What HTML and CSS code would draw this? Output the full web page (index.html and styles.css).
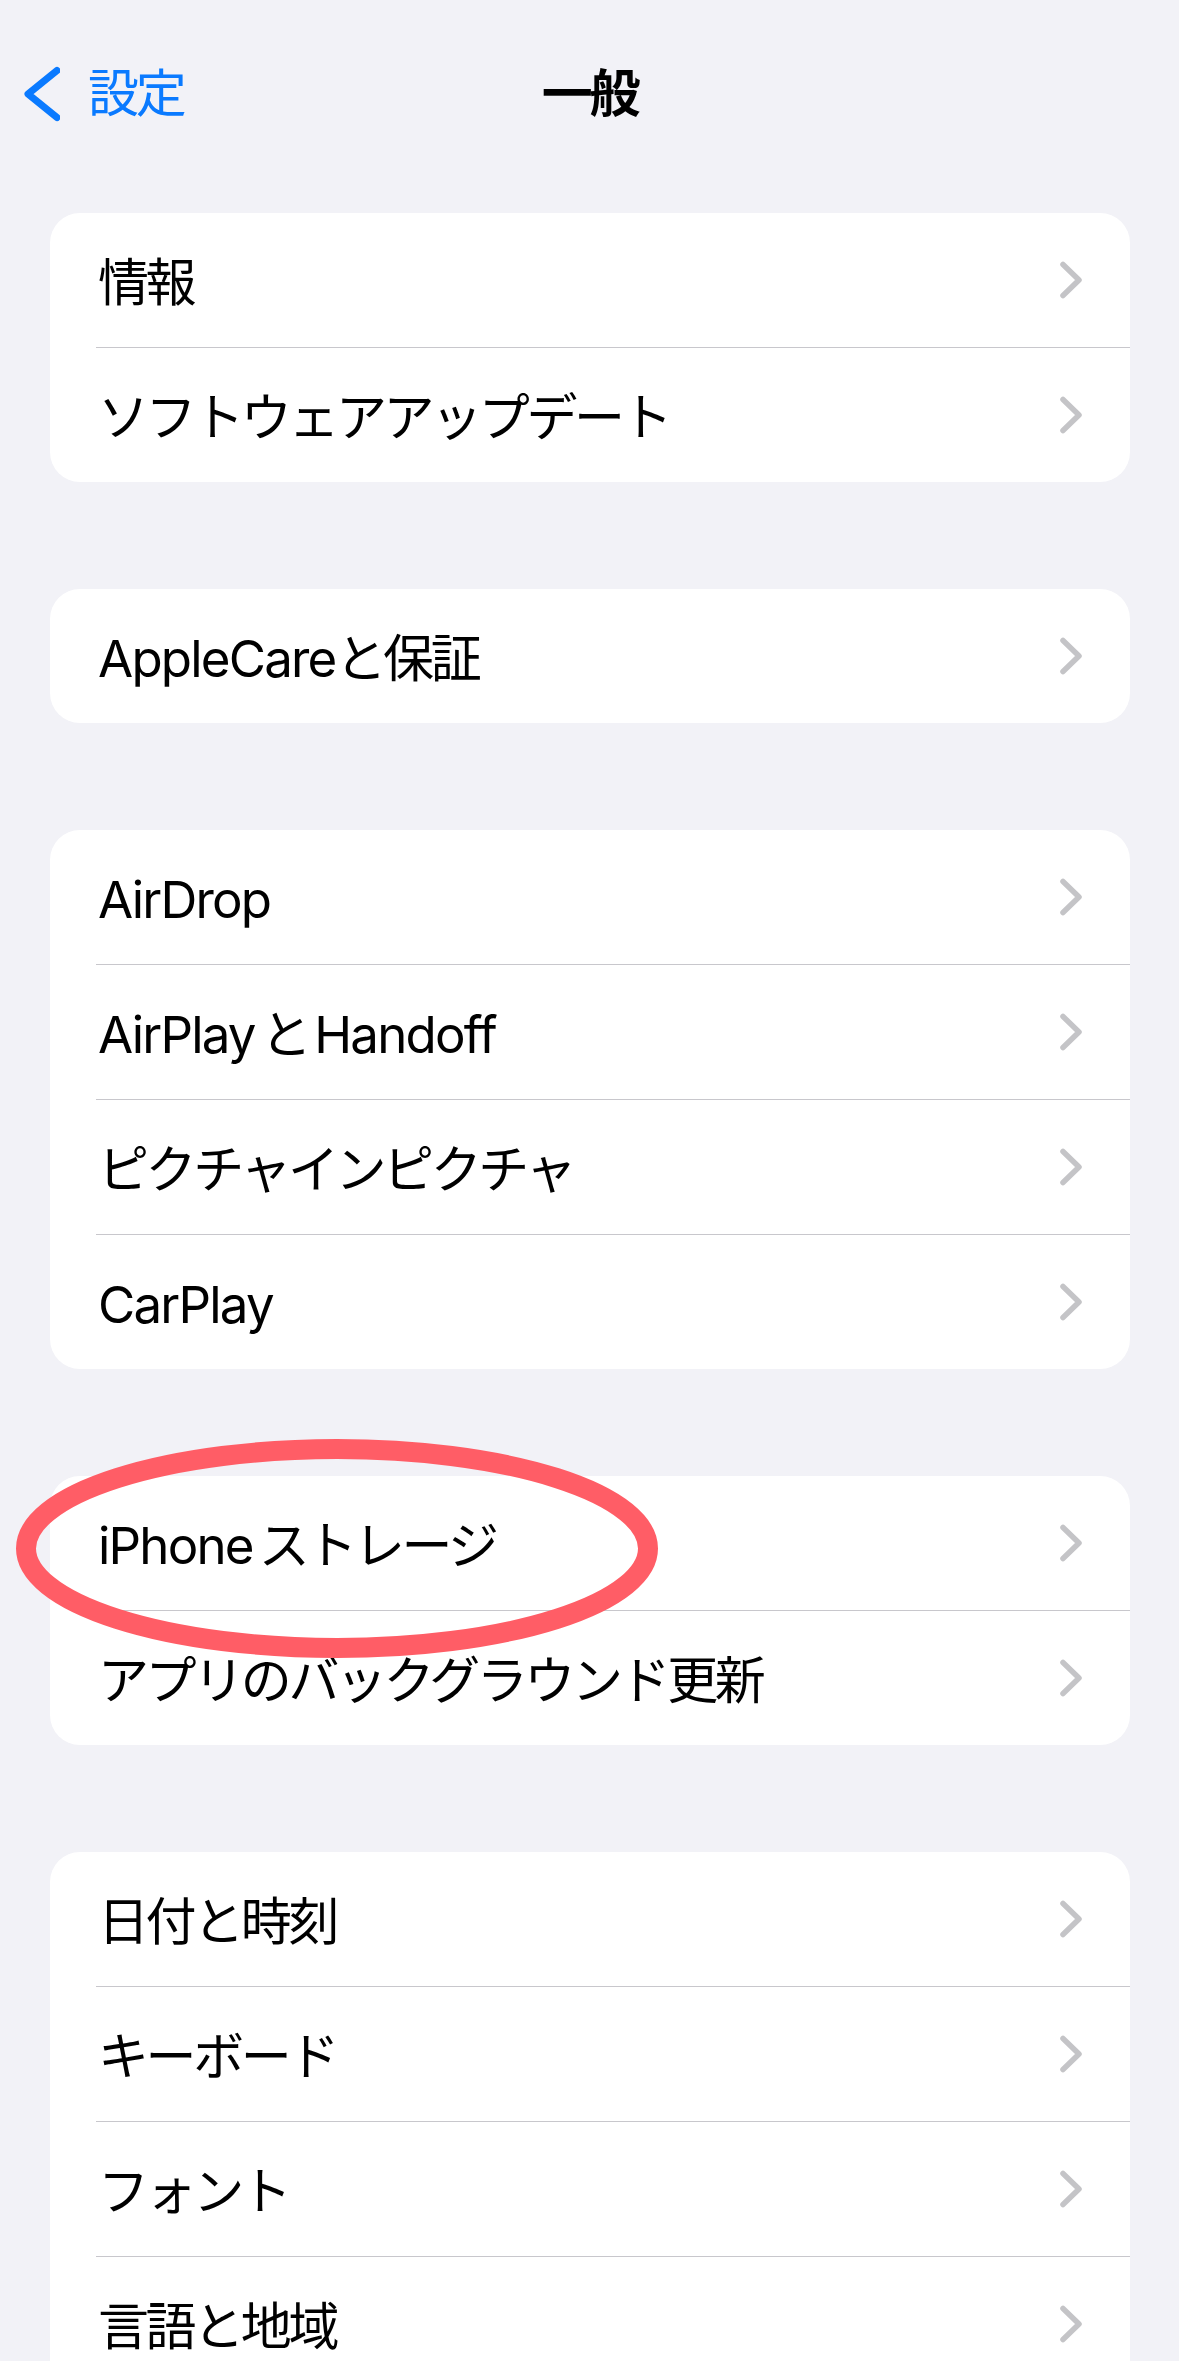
FILE: index.html
```html
<!DOCTYPE html>
<html lang="ja">
<head>
<meta charset="utf-8">
<title>一般</title>
<link rel="stylesheet" href="styles.css">
</head>
<body>
<div class="screen">
  <header class="nav">
    <a class="back">
      <svg class="back-chev" width="40" height="60" viewBox="0 0 40 60"><path d="M37 6.5 L8 30 L37 53.5" /></svg>
      <span class="back-label">設定</span>
    </a>
    <h1 class="title">一般</h1>
    <span class="nav-spacer"></span>
  </header>

  <main class="groups">
    <section class="card">
      <div class="row"><div class="row-inner"><span class="label">情報</span><svg class="chev" width="26" height="42" viewBox="0 0 26 42"><path d="M5 5.5 L21 21 L5 36.5"/></svg></div></div>
      <div class="row"><div class="row-inner"><span class="label">ソフトウェアアップデート</span><svg class="chev" width="26" height="42" viewBox="0 0 26 42"><path d="M5 5.5 L21 21 L5 36.5"/></svg></div></div>
    </section>

    <section class="card">
      <div class="row"><div class="row-inner"><span class="label"><span class="en">AppleCare</span>と保証</span><svg class="chev" width="26" height="42" viewBox="0 0 26 42"><path d="M5 5.5 L21 21 L5 36.5"/></svg></div></div>
    </section>

    <section class="card">
      <div class="row"><div class="row-inner"><span class="label"><span class="en">AirDrop</span></span><svg class="chev" width="26" height="42" viewBox="0 0 26 42"><path d="M5 5.5 L21 21 L5 36.5"/></svg></div></div>
      <div class="row"><div class="row-inner"><span class="label"><span class="en">AirPlay</span> と <span class="en">Handoff</span></span><svg class="chev" width="26" height="42" viewBox="0 0 26 42"><path d="M5 5.5 L21 21 L5 36.5"/></svg></div></div>
      <div class="row"><div class="row-inner"><span class="label">ピクチャインピクチャ</span><svg class="chev" width="26" height="42" viewBox="0 0 26 42"><path d="M5 5.5 L21 21 L5 36.5"/></svg></div></div>
      <div class="row"><div class="row-inner"><span class="label"><span class="en">CarPlay</span></span><svg class="chev" width="26" height="42" viewBox="0 0 26 42"><path d="M5 5.5 L21 21 L5 36.5"/></svg></div></div>
    </section>

    <section class="card card-marked">
      <div class="row"><div class="row-inner"><span class="label"><span class="en">iPhone</span> ストレージ</span><svg class="chev" width="26" height="42" viewBox="0 0 26 42"><path d="M5 5.5 L21 21 L5 36.5"/></svg></div></div>
      <div class="row"><div class="row-inner"><span class="label">アプリのバックグラウンド更新</span><svg class="chev" width="26" height="42" viewBox="0 0 26 42"><path d="M5 5.5 L21 21 L5 36.5"/></svg></div></div>
      <svg class="mark" width="642" height="219" viewBox="0 0 642 219"><ellipse cx="321" cy="109.5" rx="311" ry="99.5"/></svg>
    </section>

    <section class="card">
      <div class="row"><div class="row-inner"><span class="label">日付と時刻</span><svg class="chev" width="26" height="42" viewBox="0 0 26 42"><path d="M5 5.5 L21 21 L5 36.5"/></svg></div></div>
      <div class="row"><div class="row-inner"><span class="label">キーボード</span><svg class="chev" width="26" height="42" viewBox="0 0 26 42"><path d="M5 5.5 L21 21 L5 36.5"/></svg></div></div>
      <div class="row"><div class="row-inner"><span class="label">フォント</span><svg class="chev" width="26" height="42" viewBox="0 0 26 42"><path d="M5 5.5 L21 21 L5 36.5"/></svg></div></div>
      <div class="row"><div class="row-inner"><span class="label">言語と地域</span><svg class="chev" width="26" height="42" viewBox="0 0 26 42"><path d="M5 5.5 L21 21 L5 36.5"/></svg></div></div>
    </section>
  </main>
</div>
</body>
</html>
```

FILE: styles.css
```css
html, body {
  margin: 0;
  padding: 0;
  background: #f2f2f7;
}

body {
  font-family: Inter, "Noto Sans CJK JP", sans-serif;
  color: #000;
  -webkit-font-smoothing: antialiased;
}

.screen {
  width: 1179px;
  height: 2361px;
  overflow: hidden;
  background: #f2f2f7;
}

/* navigation bar */
.nav {
  height: 188px;
  display: grid;
  grid-template-columns: 1fr auto 1fr;
  align-items: center;
}

.back {
  display: flex;
  align-items: center;
  padding-left: 20px;
  color: #0a7aff;
}

.back-chev {
  display: block;
  flex: none;
}

.back-chev path {
  fill: none;
  stroke: #0a7aff;
  stroke-width: 7;
  stroke-linecap: round;
  stroke-linejoin: round;
}

.back-label {
  margin-left: 28px;
  font-size: 51px;
  line-height: 60px;
  font-weight: 400;
  letter-spacing: -3.3px;
}

.title {
  margin: 0;
  font-size: 51px;
  line-height: 60px;
  font-weight: 700;
  letter-spacing: -3.3px;
  text-align: center;
}

/* grouped list */
.groups {
  display: flex;
  flex-direction: column;
  gap: 107px;
  padding-top: 25px;
}

.card {
  margin: 0 49px 0 50px;
  background: #fff;
  border-radius: 30px;
  display: flex;
  flex-direction: column;
}

.card-marked {
  position: relative;
}

.row {
  padding-left: 46px;
  display: flex;
}

.row-inner {
  flex: 1;
  height: 134px;
  display: flex;
  align-items: center;
  justify-content: space-between;
  padding-left: 2px;
  padding-right: 46px;
  border-bottom: 1px solid #c8c7cc;
}

.row:last-of-type .row-inner {
  border-bottom: none;
}

.label {
  font-size: 51px;
  line-height: 60px;
  padding-top: 6px;
  white-space: nowrap;
  letter-spacing: -3.4px;
  word-spacing: -5px;
}

.en {
  letter-spacing: -1.8px;
}

.chev {
  display: block;
  flex: none;
}

.chev path {
  fill: none;
  stroke: #c4c4c7;
  stroke-width: 5.5;
  stroke-linecap: round;
  stroke-linejoin: round;
}

/* red annotation */
.mark {
  position: absolute;
  left: -34px;
  top: -37px;
  overflow: visible;
  pointer-events: none;
}

.mark ellipse {
  fill: none;
  stroke: #ff5d66;
  stroke-width: 20;
}
```
